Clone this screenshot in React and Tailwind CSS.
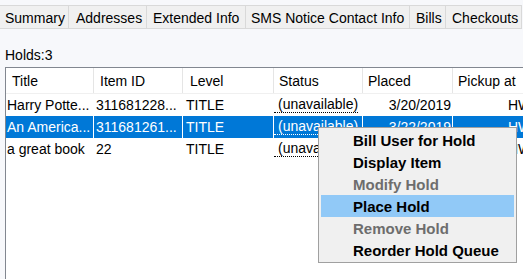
const tabs = [
  { label: 'Summary', w: 'w-[69px] pl-[5px]' },
  { label: 'Addresses', w: 'w-[78px] pl-[7px]' },
  { label: 'Extended Info', w: 'w-[99px] pl-[6px]' },
  { label: 'SMS Notice Contact Info', w: 'w-[164px] pl-[5px]' },
  { label: 'Bills', w: 'w-[36px] pl-[6px]' },
  { label: 'Checkouts', w: 'w-[76px] pl-[6px]' },
];

const holds = [
  { title: 'Harry Potte...', itemId: '311681228...', level: 'TITLE', placed: '3/20/2019', pickup: 'HW' },
  { title: 'An America...', itemId: '311681261...', level: 'TITLE', placed: '3/22/2019', pickup: 'HW', selected: true },
  { title: 'a great book', itemId: '22', level: 'TITLE', placed: '3/25/2019', pickup: 'HW' },
];

const menuItems = [
  { label: 'Bill User for Hold' },
  { label: 'Display Item' },
  { label: 'Modify Hold', disabled: true },
  { label: 'Place Hold', active: true },
  { label: 'Remove Hold', disabled: true },
  { label: 'Reorder Hold Queue' },
];

export default function App() {
  return (
    <div className="relative w-[523px] h-[279px] overflow-hidden bg-[#f7f8fb] pt-[5px] font-['Liberation_Sans',Arial,sans-serif] text-[14px] leading-[16px] text-black">
      {/* Tabs */}
      <div className="flex">
        {tabs.map((t) => (
          <div
            key={t.label}
            className={`${t.w} h-[24px] shrink-0 border-t border-b border-r border-[#d9d9d9] bg-[#f0f0f0] pt-[4px] whitespace-nowrap`}
          >
            {t.label}
          </div>
        ))}
      </div>

      <div className="pl-[5px] mt-[18px] mb-[4px]">Holds:3</div>

      {/* Holds table */}
      <div className="ml-[5px] h-[220px] border-l border-t border-[#828790] bg-white">
        <div className="flex h-[26px] border-b border-[#f0f0f0]">
          <div className="w-[88px] shrink-0 border-r border-[#e5e5e5] pl-[6px] flex items-center">Title</div>
          <div className="w-[89px] shrink-0 border-r border-[#e5e5e5] pl-[6px] flex items-center">Item ID</div>
          <div className="w-[91px] shrink-0 border-r border-[#e5e5e5] pl-[7px] flex items-center">Level</div>
          <div className="w-[89px] shrink-0 border-r border-[#e5e5e5] pl-[5px] flex items-center">Status</div>
          <div className="w-[90px] shrink-0 border-r border-[#e5e5e5] pl-[5px] flex items-center">Placed</div>
          <div className="w-[90px] shrink-0 pl-[5px] flex items-center">Pickup at</div>
        </div>

        {holds.map((h) => (
          <div
            key={h.title}
            className={`flex h-[22px] whitespace-nowrap ${h.selected ? 'bg-[#0078d7] text-white' : ''}`}
          >
            <div className="w-[88px] shrink-0 border-r border-white pl-[1px] flex items-center overflow-hidden">{h.title}</div>
            <div className="w-[89px] shrink-0 border-r border-white pl-[2px] flex items-center overflow-hidden">{h.itemId}</div>
            <div className="w-[91px] shrink-0 border-r border-white pl-[3px] flex items-center overflow-hidden">{h.level}</div>
            <div className="w-[89px] shrink-0 border-r border-white flex items-center overflow-hidden">
              <span
                className={`pl-[4px] leading-[15px] border-b border-dotted ${h.selected ? 'border-white' : 'border-black'}`}
              >
                (unavailable)
              </span>
            </div>
            <div className="w-[90px] shrink-0 border-r border-white pr-[1px] flex items-center justify-end overflow-hidden">{h.placed}</div>
            <div className="w-[90px] shrink-0 pl-[55px] flex items-center overflow-hidden">{h.pickup}</div>
          </div>
        ))}
      </div>

      {/* Context menu */}
      <div className="absolute left-[318px] top-[127px] w-[199px] border border-[#a0a0a0] bg-[#f0f0f0] py-[1px] text-[15px] font-bold leading-[17px]">
        {menuItems.map((m) => (
          <div
            key={m.label}
            className={`mx-[2px] h-[22px] pl-[32px] flex items-center whitespace-nowrap ${m.active ? 'bg-[#91c9f7]' : ''} ${m.disabled ? 'text-[#6d6d6d]' : 'text-black'}`}
          >
            {m.label}
          </div>
        ))}
      </div>
    </div>
  );
}
